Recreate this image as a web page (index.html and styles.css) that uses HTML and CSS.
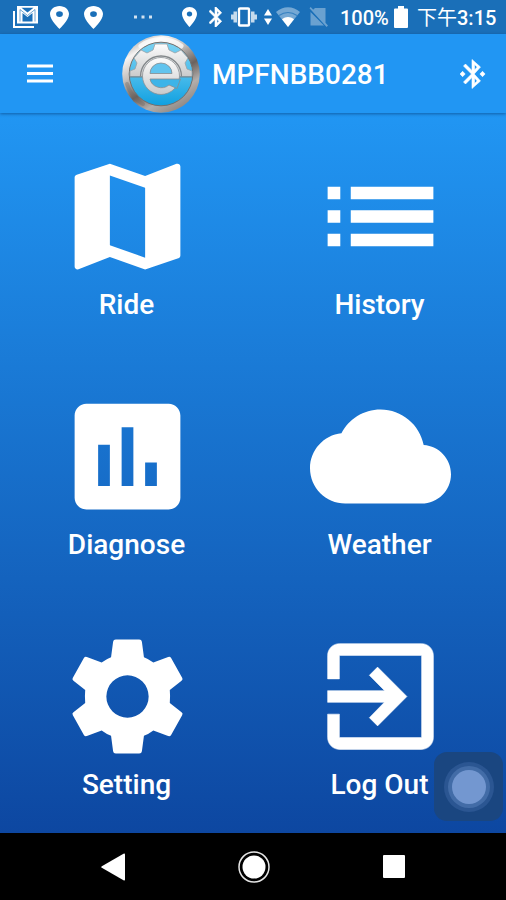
FILE: index.html
```
<!DOCTYPE html>
<html lang="en">
<head>
  <meta charset="UTF-8" />
  <meta name="viewport" content="width=device-width, initial-scale=1.0"/>
  <title>MPFNBB0281</title>
  <link rel="stylesheet" href="styles.css">
</head>
<body>
  <!-- STATUS BAR -->
  <div class="status-bar">
    <svg class="st-mail" width="25" height="22" viewBox="0 0 25 22">
      <path d="M1 5v16h20" fill="none" stroke="#fff" stroke-width="2"/>
      <path d="M4 0h21v17.500H4z"/>
      <path d="M7 15.500V3.500l7.500 6 7.500-6v12" fill="none" stroke="#1a6fb8" stroke-width="1" opacity=".6"/>
      <path d="M9.500 15.500V7l5 4 5-4v8.500z" fill="#1a6fb8"/>
      <path d="M8.500 1.800h12l-6 4.700z" fill="#1a6fb8"/>
    </svg>
    <svg class="st-pin" width="19" height="23" viewBox="5 2 14 20" preserveAspectRatio="none"><path d="M12 2C8.130 2 5 5.130 5 9c0 5.250 7 13 7 13s7-7.750 7-13c0-3.870-3.130-7-7-7zm0 9.500a2.500 2.500 0 0 1 0-5 2.500 2.500 0 0 1 0 5z"/></svg>
    <svg class="st-pin second" width="19" height="23" viewBox="5 2 14 20" preserveAspectRatio="none"><path d="M12 2C8.130 2 5 5.130 5 9c0 5.250 7 13 7 13s7-7.750 7-13c0-3.870-3.130-7-7-7zm0 9.500a2.500 2.500 0 0 1 0-5 2.500 2.500 0 0 1 0 5z"/></svg>
    <svg class="st-dots" width="20" height="4" viewBox="0 0 20 4" opacity=".8"><path d="M1 .5h3v3H1zM8.500.5h3v3h-3zM16 .5h3v3h-3z"/></svg>
    <svg class="st-gps" width="15" height="20" viewBox="5 2 14 20" preserveAspectRatio="none"><path d="M12 2C8.130 2 5 5.130 5 9c0 5.250 7 13 7 13s7-7.750 7-13c0-3.870-3.130-7-7-7zm0 9.500a2.500 2.500 0 0 1 0-5 2.500 2.500 0 0 1 0 5z"/></svg>
    <svg class="st-bt" width="13" height="20" viewBox="5 2 13 20"><path stroke="#fff" stroke-width=".6" d="M17.710 7.710L12 2h-1v7.590L6.410 5 5 6.410 10.590 12 5 17.590 6.410 19 11 14.410V22h1l5.710-5.710-4.300-4.290 4.300-4.290zM13 5.830l1.880 1.880L13 9.590V5.830zm1.880 10.460L13 18.170v-3.760l1.880 1.880z"/></svg>
    <svg class="st-vib" width="26" height="20" viewBox="0 0 26 20">
      <rect x="8" y="1.500" width="10" height="17" rx="1" fill="none" stroke="#fff" stroke-width="2.400"/>
      <path d="M0 7.500h2.500v5H0zM2.500 4.500H6v11H2.500zM20 4.500h3.500v11H20zM23.500 7.500H26v5h-2.500z" opacity=".75"/>
    </svg>
    <svg class="st-data" width="8" height="16" viewBox="0 0 8 16"><path d="M4 0l4 6.500H0zM4 16l4-6.500H0z"/></svg>
    <svg class="st-wifi" width="24" height="20" viewBox="0 0 24 20">
      <path d="M0 5C7-1.500 17-1.500 24 5L12 20z" opacity=".4"/>
      <path d="M3 8.500c6-4 12-4 18 0" fill="none" stroke="#1a6fb8" stroke-width="1.200" opacity=".7"/>
      <path d="M6 12.300c4-3 8-3 12 0L12 20z"/>
    </svg>
    <svg class="st-sim" width="19" height="20" viewBox="0 0 19 20" opacity=".35"><path d="M6 1h10.500v15.500L3 3.800zM1.500 5L15 18.500H1.500zM.5 1.200L1.700 0 19 18.600 17.600 20z"/></svg>
    <span class="st-text percent">100%</span>
    <svg class="st-battery" width="14" height="22" viewBox="0 0 14 22"><path d="M4 0h6v2.500h3q1 0 1 1V21q0 1-1 1H1q-1 0-1-1V3.500q0-1 1-1h3z"/></svg>
    <span class="st-text clock"><span class="ampm">下午</span>3:15</span>
  </div>

  <!-- HEADER -->
  <header class="toolbar">
    <svg class="menu-btn" width="26" height="19" viewBox="0 0 26 19"><path d="M0 .5h26v3H0zM0 8h26v3H0zM0 15.500h26v3H0z"/></svg>
    <svg class="logo" width="80" height="80" viewBox="0 0 80 80">
      <defs>
        <linearGradient id="ring" x1=".1" y1="0" x2=".7" y2="1">
          <stop offset="0" stop-color="#8c8886"/>
          <stop offset=".2" stop-color="#f6f4f3"/>
          <stop offset=".4" stop-color="#c4bfbc"/>
          <stop offset=".62" stop-color="#6a625e"/>
          <stop offset=".8" stop-color="#b3aeab"/>
          <stop offset="1" stop-color="#8b8581"/>
        </linearGradient>
        <linearGradient id="metal" x1="0" y1="0" x2="0" y2="1">
          <stop offset="0" stop-color="#fdfdfd"/>
          <stop offset="1" stop-color="#c9cacb"/>
        </linearGradient>
        <linearGradient id="disc" x1="0" y1="0" x2="0" y2="1">
          <stop offset="0" stop-color="#7ad2f2"/>
          <stop offset=".5" stop-color="#4dbdec"/>
          <stop offset="1" stop-color="#10a0e0"/>
        </linearGradient>
      </defs>
      <circle cx="40" cy="40" r="38.800" fill="url(#ring)"/>
      <path d="M20 12a34.500 34.500 0 0 1 40 0" fill="none" stroke="#fff" stroke-width="5" stroke-linecap="round" opacity=".75"/>
      <path d="M6 50a35.500 35.500 0 0 0 16 20" fill="none" stroke="#6e655f" stroke-width="4" stroke-linecap="round" opacity=".35"/>
      <circle cx="40" cy="40" r="31.800" fill="url(#disc)" stroke="#756f6c"/>
      <!-- upper half of the gear -->
      <path d="M9 42.500V37l5-2 2-6-3-5 7-8 6 3 6-3 2-6h12l2 6 6 3 6-3 7 8-3 5 2 6 5 2v5.500z" fill="url(#metal)" stroke="#9aa2a7" stroke-width=".8"/>
      <path d="M19.500 42.500a20.500 20.500 0 0 1 41 0" fill="none" stroke="#82878a" stroke-width="1.300"/>
      <path d="M9 43h62" stroke="#6f8590" stroke-width="1.200"/>
      <!-- letter e -->
      <circle cx="40" cy="42" r="18.500" fill="url(#metal)" stroke="#8d9296" stroke-width=".8"/>
      <path d="M29 39.500a11 10.500 0 0 1 22 0z" fill="#62c4ee" stroke="#868b8f" stroke-width=".8"/>
      <path d="M59.500 45H29a11.500 10.500 0 0 0 19 6l8 3.500z" fill="#3db4e8" stroke="#868b8f" stroke-width=".8"/>
    </svg>
    <h1>MPFNBB0281</h1>
    <svg class="bt-btn" width="26" height="30" viewBox="0 0 26 30">
      <path stroke="#fff" stroke-width=".6" d="M12 .5l8.500 7.500-6.300 7 6.300 7-8.500 7.500V18.500L5.500 25 3.500 23l8-8-8-8 2-2 6.500 6.500zM14.500 5.500V11l2.700-2.900zM14.500 19v5.500l2.700-2.600zM2.600 12.300L5.200 15l-2.600 2.700L0 15zM22.500 12.300l2.600 2.700-2.600 2.700-2.600-2.700z"/>
    </svg>
  </header>

  <!-- MAIN MENU -->
  <main class="menu">
    <a class="item">
      <svg viewBox="0 0 24 24"><path d="M20.500 3l-.16.03L15 5.100 9 3 3.360 4.900c-.21.07-.36.25-.36.48V20.500c0 .28.22.5.5.5l.16-.03L9 18.900l6 2.100 5.640-1.900c.21-.07.36-.25.36-.48V3.500c0-.28-.22-.5-.5-.5zM15 19l-6-2.110V5l6 2.110V19z"/></svg>
      <span>Ride</span>
    </a>
    <a class="item">
      <svg viewBox="0 0 512 512"><path d="M64 233.500h46v45H64zM64 319h46v45H64zM64 148h46v45H64zM148 233.500h300v45H148zM148 319h300v45H148zM148 148h300v45H148z"/></svg>
      <span>History</span>
    </a>
    <a class="item">
      <svg viewBox="0 0 24 24"><path d="M19 3H5c-1.100 0-2 .9-2 2v14c0 1.100.9 2 2 2h14c1.100 0 2-.9 2-2V5c0-1.100-.9-2-2-2zM9 17H7v-7h2v7zm4 0h-2V7h2v10zm4 0h-2v-4h2v4z"/></svg>
      <span>Diagnose</span>
    </a>
    <a class="item">
      <svg viewBox="0 0 24 24"><path d="M19.350 10.040C18.670 6.590 15.640 4 12 4 9.110 4 6.600 5.640 5.350 8.040 2.340 8.360 0 10.910 0 14c0 3.310 2.690 6 6 6h13c2.760 0 5-2.240 5-5 0-2.640-2.050-4.780-4.650-4.960z"/></svg>
      <span>Weather</span>
    </a>
    <a class="item">
      <svg viewBox="0 0 24 24"><path transform="translate(12 12) scale(.1)" fill-rule="evenodd" d="M-20-97H20Q24-97 24.500-93L28-67Q36-64 44-58L68-67Q72-69 74-66L93-32Q95-29 92-27L72-11Q73 0 72 11L92 27Q95 29 93 32L74 66Q72 69 68 67L44 58Q36 64 28 67L24.500 93Q24 97 20 97H-20Q-24 97-24.500 93L-28 67Q-36 64-44 58L-68 67Q-72 69-74 66L-93 32Q-95 29-92 27L-72 11Q-73 0-72-11L-92-27Q-95-29-93-32L-74-66Q-72-69-68-67L-44-58Q-36-64-28-67L-24.500-93Q-24-97-20-97zM0-36a36 36 0 1 0 0 72 36 36 0 1 0 0-72z"/></svg>
      <span>Setting</span>
    </a>
    <a class="item">
      <svg viewBox="0 0 512 512"><path d="M215.500 332.800l29.900 29.900L352 256 245.300 149.300l-29.800 29.900 55.400 55.500H64v42.600h205.900zM405.300 64H106.700C83.200 64 64 83.200 64 106.700V192h42.700v-85.300h298.600v298.600H106.700V320H64v85.300c0 23.500 19.200 42.700 42.700 42.700h298.600c23.500 0 42.700-19.200 42.700-42.700V106.700C448 83.200 428.800 64 405.300 64z" stroke="#fff" stroke-width="2"/></svg>
      <span>Log Out</span>
    </a>
  </main>

  <!-- floating assistive button -->
  <div class="assist"><div class="assist-dot"></div></div>

  <!-- NAVIGATION BAR -->
  <nav class="nav-bar">
    <svg width="24" height="28" viewBox="0 0 24 28"><path d="M22.500.7q1.500-.8 1.500.8v25q0 1.600-1.500.8L.8 14.800q-1.200-.8 0-1.600z"/></svg>
    <svg width="32" height="32" viewBox="0 0 32 32"><circle cx="16" cy="16" r="11.500"/><circle cx="16" cy="16" r="15" fill="none" stroke="#e6e6e6" stroke-width="1.500"/></svg>
    <svg width="22" height="23" viewBox="0 0 22 23"><rect width="22" height="23" rx="1"/></svg>
  </nav>
</body>
</html>
```
FILE: styles.css
```
:root {
  --primary: #2196f3;
  --status: #1a6fb8;
  --dark: #0d47a1;
}
* {
  box-sizing: border-box;
}
body {
  margin: 0;
  width: 506px;
  height: 900px;
  overflow: hidden;
  display: flex;
  flex-direction: column;
  background: #000;
  color: #fff;
  font-family: Roboto, "Noto Sans CJK TC", sans-serif;
}
svg {
  display: block;
  flex: none;
  fill: #fff;
}

/* status bar */
.status-bar {
  height: 34px;
  flex: none;
  display: flex;
  align-items: center;
  padding-left: 13px;
  background: var(--status);
}
.st-pin {
  margin-left: 12px;
}
.st-pin.second {
  margin-left: 15px;
}
.st-dots {
  margin-left: 30px;
}
.st-gps {
  margin-left: 29px;
}
.st-bt {
  margin-left: 12px;
}
.st-vib {
  margin-left: 9px;
}
.st-data {
  margin-left: 7px;
}
.st-wifi {
  margin-left: 4px;
}
.st-sim {
  margin-left: 9px;
}
.st-text {
  font-size: 20px;
  font-weight: 500;
  line-height: 34px;
  white-space: nowrap;
  padding-top: 2px;
}
.percent {
  width: 54px;
  margin-left: 12px;
}
.clock {
  margin-left: 9px;
}
.ampm {
  font-weight: 400;
}

/* header */
.toolbar {
  height: 79px;
  flex: none;
  display: flex;
  align-items: center;
  padding-left: 27px;
  background: var(--primary);
  box-shadow: 0 1px 3px rgba(0, 40, 90, 0.5);
  z-index: 1;
}
.logo {
  margin-left: 68px;
}
h1 {
  width: 248px;
  margin: 0 0 0 11px;
  font-size: 28px;
  font-weight: 500;
  line-height: 34px;
  padding-top: 2px;
}

/* menu */
.menu {
  height: 720px;
  flex: none;
  display: grid;
  grid-template-columns: 1fr 1fr;
  grid-template-rows: repeat(3, 240px);
  padding-top: 33px;
  background: linear-gradient(var(--primary), var(--dark));
}
.item {
  display: flex;
  flex-direction: column;
  align-items: center;
  font-size: 28px;
  font-weight: 500;
}
.item svg {
  width: 141px;
  height: 141px;
  margin: 0 0 1px 1px;
}
.item span {
  line-height: 34px;
}

.assist {
  position: absolute;
  left: 434px;
  top: 752px;
  width: 69px;
  height: 69px;
  border-radius: 13px;
  background: #1a4680;
  display: flex;
  align-items: center;
  justify-content: center;
  z-index: 2;
}
.assist-dot {
  width: 34px;
  height: 34px;
  border-radius: 50%;
  background: #7397d0;
  box-shadow: 0 0 0 4px #426ca7, 0 0 0 8px #2b5692;
}

/* navigation bar */
.nav-bar {
  flex: 1;
  display: flex;
  align-items: center;
  justify-content: space-between;
  padding: 0 101px;
  background: #000;
  z-index: 1;
}
```
